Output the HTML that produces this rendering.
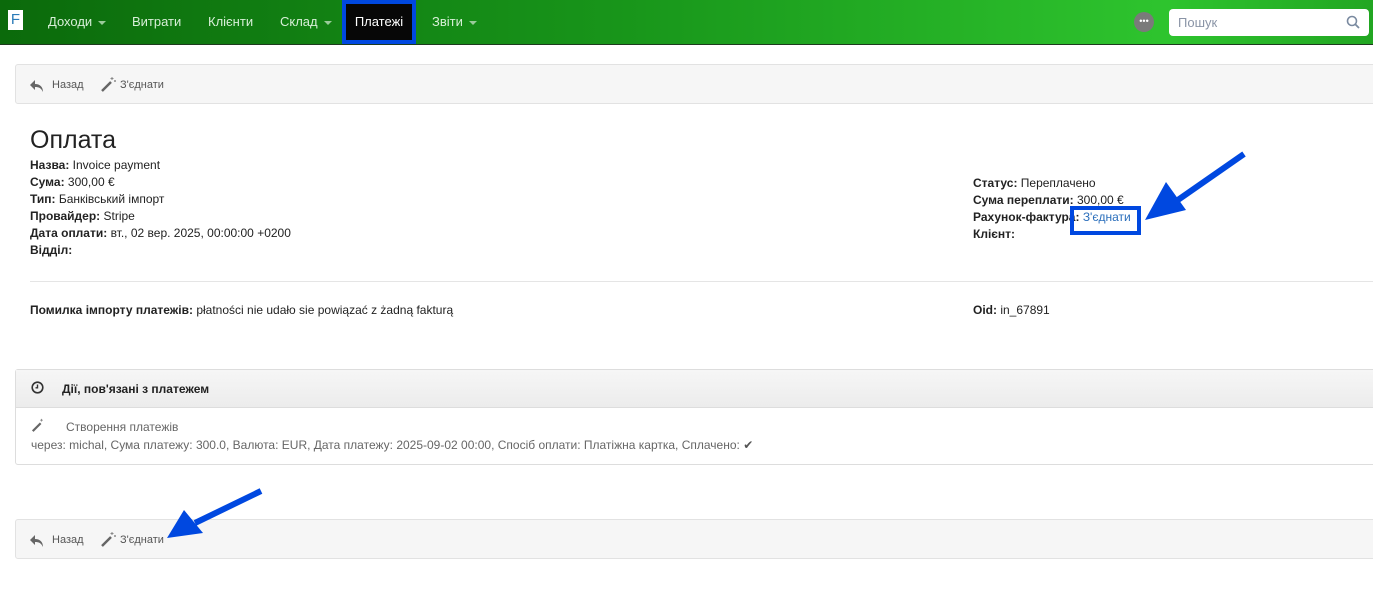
<!DOCTYPE html>
<html><head><meta charset="utf-8"><style>
*{box-sizing:border-box}
body{margin:0;width:1373px;height:597px;background:#fff;font-family:"Liberation Sans",Arial,sans-serif;font-size:12px;color:#333;position:relative;overflow:hidden}
.nav{position:absolute;left:0;top:0;width:1373px;height:45px;background:linear-gradient(90deg,#0b6a0b 0%,#18951a 45%,#2ec42e 85%,#22a622 100%);border-bottom:1px solid #1e3a1e}
.nav .it{position:absolute;top:14px;color:#d8efd8;font-size:13px}
.caret{display:inline-block;width:0;height:0;border-left:4px solid transparent;border-right:4px solid transparent;border-top:4px solid #9acb9a;vertical-align:middle;margin-left:6px}
.logo{position:absolute;left:8px;top:10px;width:15px;height:20px;background:#fff;color:#2a7ab8;font-size:15px;text-align:center;line-height:20px}
.act{position:absolute;left:342px;top:0;width:74px;height:44px;background:#0048e0;padding:4px}
.act div{width:100%;height:100%;background:#070707;color:#fff;font-size:13px;text-align:center;line-height:36px}
.dot{position:absolute;left:1134px;top:12px;width:20px;height:20px;border-radius:50%;background:#7a7a7a;color:#fff;font-size:9px;text-align:center;line-height:18px}
.search{position:absolute;left:1169px;top:9px;width:200px;height:27px;background:#fff;border-radius:4px;color:#8a94a6;font-size:13px;padding:6px 9px}
.bar{position:absolute;left:15px;width:1370px;height:40px;background:#f6f6f6;border:1px solid #e2e2e2;border-radius:3px}
.bar span{position:absolute;top:14px;font-size:11px;color:#555}
.ic{position:absolute;top:11px}
h1{position:absolute;left:30px;top:126px;margin:0;font-size:25px;font-weight:normal;color:#222}
.f{position:absolute;font-size:12px;color:#222;line-height:17px}
b{font-weight:bold}
.hr{position:absolute;left:30px;top:281px;width:1343px;border-top:1px solid #e5e5e5}
.panel{position:absolute;left:15px;top:369px;width:1370px;height:96px;border:1px solid #ddd;border-radius:3px}
.ph{height:38px;background:linear-gradient(#f6f6f6,#ececec);border-bottom:1px solid #ddd;font-weight:bold;font-size:12px;color:#222;padding:12px 0 0 46px;position:relative}
</style></head><body>
<div class="nav">
<div class="logo">F</div>
<div class="it" style="left:48px">Доходи<span class="caret"></span></div>
<div class="it" style="left:132px">Витрати</div>
<div class="it" style="left:208px">Клієнти</div>
<div class="it" style="left:280px">Склад<span class="caret"></span></div>
<div class="it" style="left:432px">Звіти<span class="caret"></span></div>
<div class="dot">•••</div>
<div class="search">Пошук<svg style="position:absolute;right:9px;top:6px" width="14" height="14" viewBox="0 0 14 14"><circle cx="6" cy="6" r="4.5" fill="none" stroke="#7a8aa0" stroke-width="1.6"/><path d="M9.5 9.5L13 13" stroke="#7a8aa0" stroke-width="1.8"/></svg></div>
</div>
<div class="act"><div>Платежі</div></div>

<div class="bar" style="top:64px">
<svg class="ic" style="left:13px;top:14px" width="16" height="14" viewBox="0 0 16 14"><path d="M6 1L1 6l5 5V8c4 0 6 1 8 5 0-5-3-8-8-8V1z" fill="#666"/></svg>
<span style="left:36px">Назад</span>
<svg class="ic" style="left:84px" width="16" height="16" viewBox="0 0 16 16"><path d="M2 15L11 6" stroke="#666" stroke-width="2.5"/><path d="M12 1v3M10.5 2.5h3M15 4v2M14 5h2" stroke="#888"/></svg>
<span style="left:104px">З'єднати</span>
</div>

<h1>Оплата</h1>
<div class="f" style="left:30px;top:157px"><b>Назва:</b> Invoice payment<br><b>Сума:</b> 300,00 €<br><b>Тип:</b> Банківський імпорт<br><b>Провайдер:</b> Stripe<br><b>Дата оплати:</b> вт., 02 вер. 2025, 00:00:00 +0200<br><b>Відділ:</b></div>
<div class="f" style="left:973px;top:175px"><b>Статус:</b> Переплачено<br><b>Сума переплати:</b> 300,00 €<br><b>Рахунок-фактура:</b> <span style="color:#2a6ebb">З'єднати</span><br><b>Клієнт:</b></div>
<div style="position:absolute;left:1070px;top:206px;width:71px;height:29px;border:4px solid #0048e0"></div>
<svg style="position:absolute;left:1140px;top:150px" width="110" height="75" viewBox="0 0 110 75"><path d="M104 4L35 52" stroke="#0048e0" stroke-width="6"/><path d="M5 70L26 32L46 60Z" fill="#0048e0"/></svg>
<div class="hr"></div>
<div class="f" style="left:30px;top:302px"><b>Помилка імпорту платежів:</b> płatności nie udało sie powiązać z żadną fakturą</div>
<div class="f" style="left:973px;top:302px"><b>Oid:</b> in_67891</div>

<div class="panel">
<div class="ph"><svg style="position:absolute;left:15px;top:11px" width="13" height="13" viewBox="0 0 13 13"><circle cx="6.5" cy="6.5" r="5.3" fill="none" stroke="#333" stroke-width="1.6"/><path d="M6.5 3.5v3.3H4.5" fill="none" stroke="#333" stroke-width="1.4"/></svg>Дії, пов'язані з платежем</div>
<svg style="position:absolute;left:15px;top:48px" width="14" height="14" viewBox="0 0 16 16"><path d="M2 15L11 6" stroke="#666" stroke-width="2.5"/><path d="M12 1v3M10.5 2.5h3" stroke="#888"/></svg>
<div style="position:absolute;left:50px;top:50px;color:#666">Створення платежів</div>
<div style="position:absolute;left:15px;top:68px;color:#666">через: michal, Сума платежу: 300.0, Валюта: EUR, Дата платежу: 2025-09-02 00:00, Спосіб оплати: Платіжна картка, Сплачено: <span style="color:#555">✔</span></div>
</div>

<div class="bar" style="top:519px">
<svg class="ic" style="left:13px;top:14px" width="16" height="14" viewBox="0 0 16 14"><path d="M6 1L1 6l5 5V8c4 0 6 1 8 5 0-5-3-8-8-8V1z" fill="#666"/></svg>
<span style="left:36px">Назад</span>
<svg class="ic" style="left:84px" width="16" height="16" viewBox="0 0 16 16"><path d="M2 15L11 6" stroke="#666" stroke-width="2.5"/><path d="M12 1v3M10.5 2.5h3M15 4v2M14 5h2" stroke="#888"/></svg>
<span style="left:104px">З'єднати</span>
</div>
<svg style="position:absolute;left:165px;top:488px" width="100" height="52" viewBox="0 0 100 52"><path d="M96 3L30 35" stroke="#0048e0" stroke-width="6"/><path d="M2 50L19 22L38 45Z" fill="#0048e0"/></svg>
</body></html>
